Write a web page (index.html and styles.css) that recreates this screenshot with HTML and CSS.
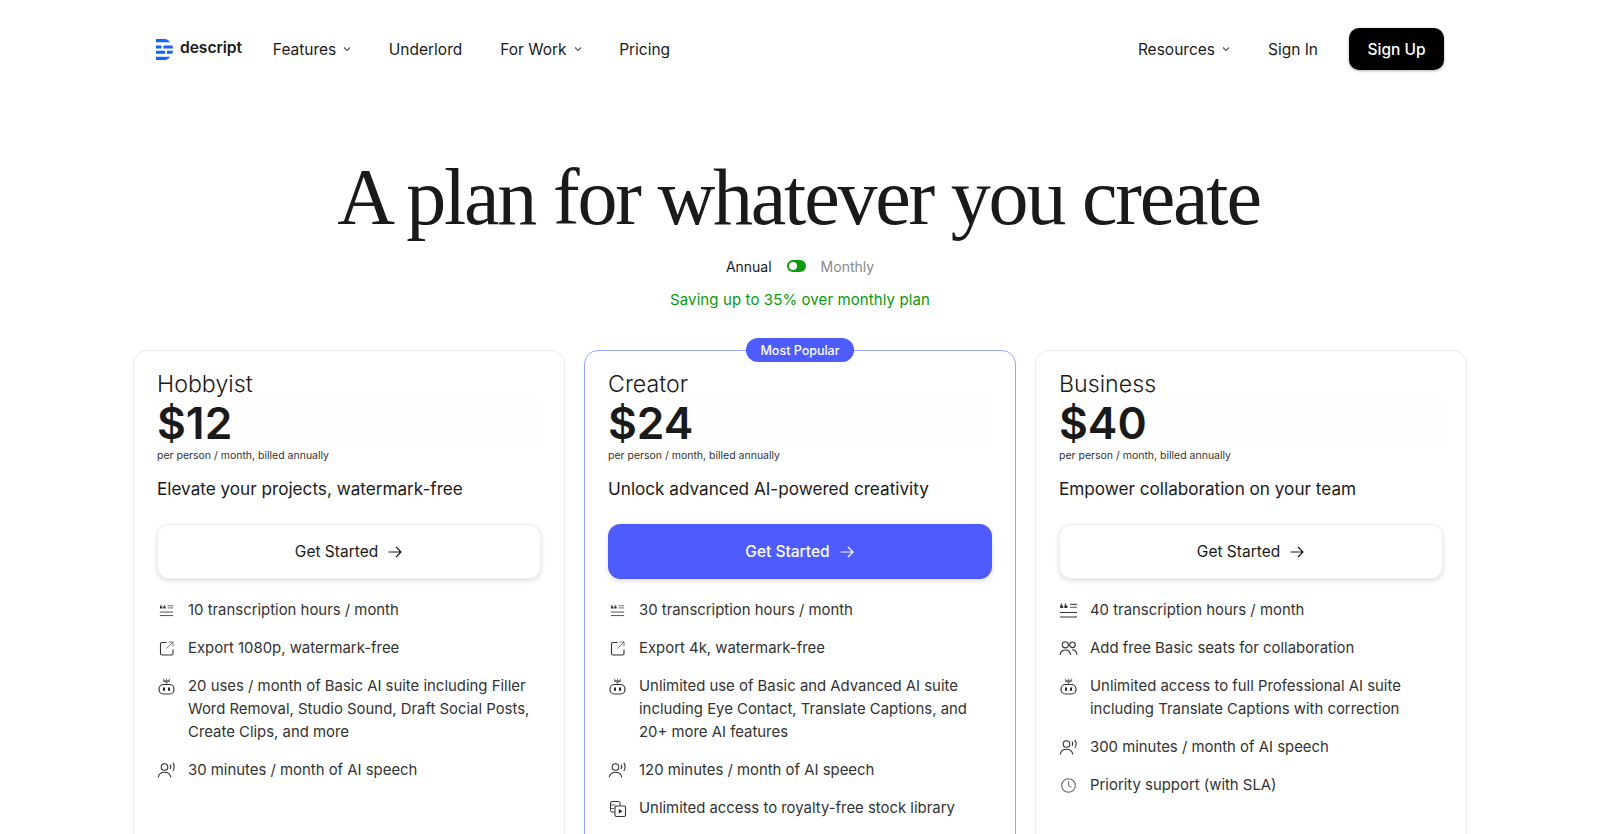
FILE: index.html
```html
<!DOCTYPE html>
<html lang="en">
<head>
<meta charset="utf-8">
<title>Descript Pricing</title>
<link rel="stylesheet" href="styles.css">
</head>
<body>
<svg class="defs" width="0" height="0" aria-hidden="true">
  <symbol id="i-chev" viewBox="0 0 10 10"><path d="M2 3.500 5 6.500 8 3.500" fill="none" stroke="currentColor" stroke-width="1.100"/></symbol>
  <symbol id="i-arrow" viewBox="0 0 16 16"><path d="M1.500 8H14M9 3l5 5-5 5" fill="none" stroke="currentColor" stroke-width="1.200"/></symbol>
  <symbol id="i-trans" viewBox="0 0 19 19"><path d="M3.200 2.500 2.400 4.500H4.200V7H1.200V4.800L2.100 2.500zM7.400 2.500 6.600 4.500H8.400V7H5.400V4.800L6.300 2.500z" fill="#2a2a2a"/><path d="M11 3.400H18M11 6.200H18" fill="none" stroke="#555" stroke-width="1.100"/><path d="M1 11.500H18M1 16H18" fill="none" stroke="#333" stroke-width="1.100"/></symbol>
  <symbol id="i-export" viewBox="0 0 19 19"><path d="M9.500 3.500H5A1.500 1.500 0 0 0 3.500 5V14.500A1.500 1.500 0 0 0 5 16H14.500A1.500 1.500 0 0 0 16 14.500V10.500" fill="none" stroke="#333" stroke-width="1.100"/><path d="M9.500 9.500 16 3M11.500 3H16V7.500" fill="none" stroke="#777" stroke-width="1"/></symbol>
  <symbol id="i-ai" viewBox="0 0 19 19"><rect x="2" y="7.500" width="15" height="9.500" rx="4.500" fill="none" stroke="#333" stroke-width="1.200"/><rect x="6" y="10.200" width="2" height="3.800" rx="1" fill="#222"/><rect x="11" y="10.200" width="2" height="3.800" rx="1" fill="#222"/><path d="M6 1.500 9.500 6.500 13 1.500M9.500 1.500V6.500M6 4.800 13 3.200M6 3.200 13 4.800" fill="none" stroke="#666" stroke-width=".9"/></symbol>
  <symbol id="i-speech" viewBox="0 0 19 19"><circle cx="7.500" cy="6" r="3.300" fill="none" stroke="#333" stroke-width="1.100"/><path d="M1.200 16.500C1.700 13 4 11.300 7.500 11.300S13.300 13 13.800 16.500" fill="none" stroke="#333" stroke-width="1.100"/><path d="M13 3.500C13.900 4.700 13.900 6.700 13 8M15.800 1.800C17.500 4 17.500 8 15.800 10" fill="none" stroke="#333" stroke-width="1.100"/></symbol>
  <symbol id="i-seats" viewBox="0 0 19 19"><circle cx="6.300" cy="5.800" r="3.100" fill="none" stroke="#333" stroke-width="1.100"/><circle cx="13.500" cy="5.800" r="2.800" fill="none" stroke="#333" stroke-width="1.100"/><path d="M1 16C1.400 12.800 3.300 11 6.300 11S11.200 12.800 11.600 16" fill="none" stroke="#333" stroke-width="1.100"/><path d="M13 10.800C15.600 10.800 17.600 12.500 18 15.800" fill="none" stroke="#333" stroke-width="1.100"/></symbol>
  <symbol id="i-clock" viewBox="0 0 19 19"><circle cx="9.500" cy="9.500" r="6.800" fill="none" stroke="#666" stroke-width="1.100"/><path d="M9.500 5.200V9.700L12.300 11.200" fill="none" stroke="#666" stroke-width="1"/></symbol>
  <symbol id="i-stock" viewBox="0 0 19 19"><path d="M6.500 13H4A1.500 1.500 0 0 1 2.500 11.500V4A1.500 1.500 0 0 1 4 2.500H10.500A1.500 1.500 0 0 1 12 4V6.500" fill="none" stroke="#333" stroke-width="1"/><path d="M2.500 6H7.500M2.500 9.500H6" fill="none" stroke="#555" stroke-width=".9"/><rect x="7" y="7" width="10.500" height="10.500" rx="1.500" fill="#fff" stroke="#333" stroke-width="1.100"/><path d="M10.800 10 14.500 12.300 10.800 14.600z" fill="#222"/></symbol>
</svg>

<div class="page">
  <header class="nav">
    <div class="nav-left">
      <a class="logo">
        <svg class="logo-mark" viewBox="0 0 17 21" aria-hidden="true">
          <path d="M0 0H8.500C10.700 0 12.700 1 14 3.200H0z" fill="#1463ff"/>
          <path d="M0 6.500H5.500V9.500H0zM7.500 6.500H16.300C16.700 7.400 16.900 8.400 17 9.500H7.500z" fill="#1463ff"/>
          <path d="M0 11.700H9V14.700H0zM11 11.700H17C16.900 12.800 16.700 13.800 16.300 14.700H11z" fill="#1463ff"/>
          <path d="M0 17.800H14C12.700 20 10.700 21 8.500 21H0z" fill="#1463ff"/>
        </svg>
        <span class="logo-text">descript</span>
      </a>
      <a class="nav-link nav-drop">Features<svg class="chev"><use href="#i-chev"/></svg></a>
      <a class="nav-link">Underlord</a>
      <a class="nav-link nav-drop">For Work<svg class="chev"><use href="#i-chev"/></svg></a>
      <a class="nav-link">Pricing</a>
    </div>
    <div class="nav-right">
      <a class="nav-link nav-res">Resources<svg class="chev"><use href="#i-chev"/></svg></a>
      <a class="nav-link nav-signin">Sign In</a>
      <a class="signup">Sign Up</a>
    </div>
  </header>

  <h1 class="title">A plan for whatever you create</h1>

  <div class="billing">
    <span class="bill-on">Annual</span>
    <span class="switch"><span class="knob"></span></span>
    <span class="bill-off">Monthly</span>
  </div>
  <p class="saving">Saving up to 35% over monthly plan</p>

  <section class="plans">
    <article class="plan">
      <h2 class="plan-name">Hobbyist</h2>
      <div class="price">$12</div>
      <div class="per">per person / month, billed annually</div>
      <p class="tagline">Elevate your projects, watermark-free</p>
      <a class="cta">Get Started<svg class="arrow"><use href="#i-arrow"/></svg></a>
      <ul class="features">
        <li><svg class="ficon ficon-sm"><use href="#i-trans"/></svg><span>10 transcription hours / month</span></li>
        <li><svg class="ficon"><use href="#i-export"/></svg><span>Export 1080p, watermark-free</span></li>
        <li><svg class="ficon"><use href="#i-ai"/></svg><span>20 uses / month of Basic AI suite including Filler Word Removal, Studio Sound, Draft Social Posts, Create Clips, and more</span></li>
        <li><svg class="ficon"><use href="#i-speech"/></svg><span>30 minutes / month of AI speech</span></li>
      </ul>
    </article>

    <article class="plan plan-popular">
      <span class="badge">Most Popular</span>
      <h2 class="plan-name">Creator</h2>
      <div class="price">$24</div>
      <div class="per">per person / month, billed annually</div>
      <p class="tagline">Unlock advanced AI-powered creativity</p>
      <a class="cta cta-primary">Get Started<svg class="arrow"><use href="#i-arrow"/></svg></a>
      <ul class="features">
        <li><svg class="ficon ficon-sm"><use href="#i-trans"/></svg><span>30 transcription hours / month</span></li>
        <li><svg class="ficon"><use href="#i-export"/></svg><span>Export 4k, watermark-free</span></li>
        <li><svg class="ficon"><use href="#i-ai"/></svg><span>Unlimited use of Basic and Advanced AI suite including Eye Contact, Translate Captions, and 20+ more AI features</span></li>
        <li><svg class="ficon"><use href="#i-speech"/></svg><span>120 minutes / month of AI speech</span></li>
        <li><svg class="ficon"><use href="#i-stock"/></svg><span>Unlimited access to royalty-free stock library</span></li>
      </ul>
    </article>

    <article class="plan">
      <h2 class="plan-name">Business</h2>
      <div class="price">$40</div>
      <div class="per">per person / month, billed annually</div>
      <p class="tagline">Empower collaboration on your team</p>
      <a class="cta">Get Started<svg class="arrow"><use href="#i-arrow"/></svg></a>
      <ul class="features">
        <li><svg class="ficon"><use href="#i-trans"/></svg><span>40 transcription hours / month</span></li>
        <li><svg class="ficon"><use href="#i-seats"/></svg><span>Add free Basic seats for collaboration</span></li>
        <li><svg class="ficon"><use href="#i-ai"/></svg><span>Unlimited access to full Professional AI suite including Translate Captions with correction</span></li>
        <li><svg class="ficon"><use href="#i-speech"/></svg><span>300 minutes / month of AI speech</span></li>
        <li><svg class="ficon"><use href="#i-clock"/></svg><span>Priority support (with SLA)</span></li>
      </ul>
    </article>
  </section>
</div>
</body>
</html>
```

FILE: styles.css
```css
* { box-sizing: border-box; }
html, body { margin: 0; padding: 0; height: 834px; overflow: hidden; background: #fff; }
body { font-family: Inter, "Liberation Sans", sans-serif; color: #1a1a1a; }
.defs { position: absolute; }
.page { height: 834px; overflow: hidden; padding: 28px 134px 0; }

.nav { display: flex; justify-content: space-between; align-items: center; height: 42px; padding: 0 22px; }
.nav-left { display: flex; align-items: center; }
.nav-right { display: flex; align-items: center; }
.logo { display: flex; align-items: center; margin-right: 31px; }
.logo-mark { width: 17px; height: 21px; margin-right: 7px; }
.logo-text { font-size: 15.700px; font-weight: 600; color: #1c1c1c; letter-spacing: -.1px; position: relative; top: -2px; }
.nav-link { display: flex; align-items: center; font-size: 15.500px; font-weight: 400; color: #1a1a1a; margin-right: 38px; }
.nav-drop { margin-right: 36.500px; }
.chev { width: 10px; height: 10px; margin-left: 6px; color: #555; }
.nav-res { margin-right: 37px; }
.nav-signin { margin-right: 31px; }
.signup { display: flex; align-items: center; justify-content: center; width: 95px; height: 42px; background: #000; color: #fff; border-radius: 10px; font-size: 15.500px; font-weight: 500; box-shadow: 0 1px 3px rgba(0,0,0,.3); }

.title { margin: 82px 0 0; padding-right: 3px; text-align: center; font-family: "Liberation Serif", serif; font-weight: 400; font-size: 80px; line-height: 90px; letter-spacing: -2.200px; color: #1a1a1a; }

.billing { display: flex; justify-content: center; align-items: center; margin-top: 14px; height: 20px; font-size: 14px; }
.bill-on { color: #1a1a1a; }
.bill-off { color: #8a8a8a; }
.switch { display: flex; align-items: center; width: 19px; height: 12px; margin: 0 15px; border-radius: 6px; background: #0a9a0a; padding: 2px; }
.knob { width: 8px; height: 8px; border-radius: 50%; background: #fff; }
.saving { margin: 13px 0 0; text-align: center; font-size: 15px; line-height: 22px; color: #0a9a0a; letter-spacing: .1px; }

.plans { display: grid; grid-template-columns: repeat(3, 432px); column-gap: 19px; margin: 39px 0 0 -1px; }
.plan { position: relative; height: 560px; padding: 19px 23px 0; border: 1px solid #ebebeb; border-radius: 14px; background: #fff; }
.plan-popular { border-color: #9aa2ff; }
.badge { position: absolute; top: -13px; left: 50%; transform: translateX(-50%); display: flex; align-items: center; justify-content: center; width: 108px; height: 24px; border-radius: 12px; background: #4d5bff; color: #fff; font-size: 12.500px; font-weight: 500; }
.plan-name { margin: 0; font-size: 23.200px; font-weight: 300; line-height: 28px; color: #1a1a1a; }
.price { font-size: 44.400px; font-weight: 600; line-height: 50px; margin-bottom: 1px; color: #1a1a1a; background: #fefefe; }
.per { font-size: 10.500px; line-height: 14px; color: #333; }
.tagline { margin: 14px 0 0; font-size: 17.150px; line-height: 24px; color: #1a1a1a; }
.cta { display: flex; align-items: center; justify-content: center; height: 55px; margin-top: 23px; border: 1px solid #efefef; border-radius: 12px; font-size: 15.500px; font-weight: 400; color: #1a1a1a; background: #fff; box-shadow: 0 2px 5px rgba(0,0,0,.13); }
.cta-primary { background: #4d5bff; color: #fff; border-color: #4d5bff; font-weight: 500; }
.arrow { width: 16px; height: 16px; margin-left: 9px; }
.features { list-style: none; margin: 20px 0 0; padding: 0; display: flex; flex-direction: column; gap: 15px; }
.features li { display: flex; align-items: flex-start; font-size: 14.900px; line-height: 23px; color: #333; }
.ficon { flex: 0 0 19px; width: 19px; height: 19px; margin: 2px 12px 0 0; }
.ficon-sm { transform: scale(.78); }
```
